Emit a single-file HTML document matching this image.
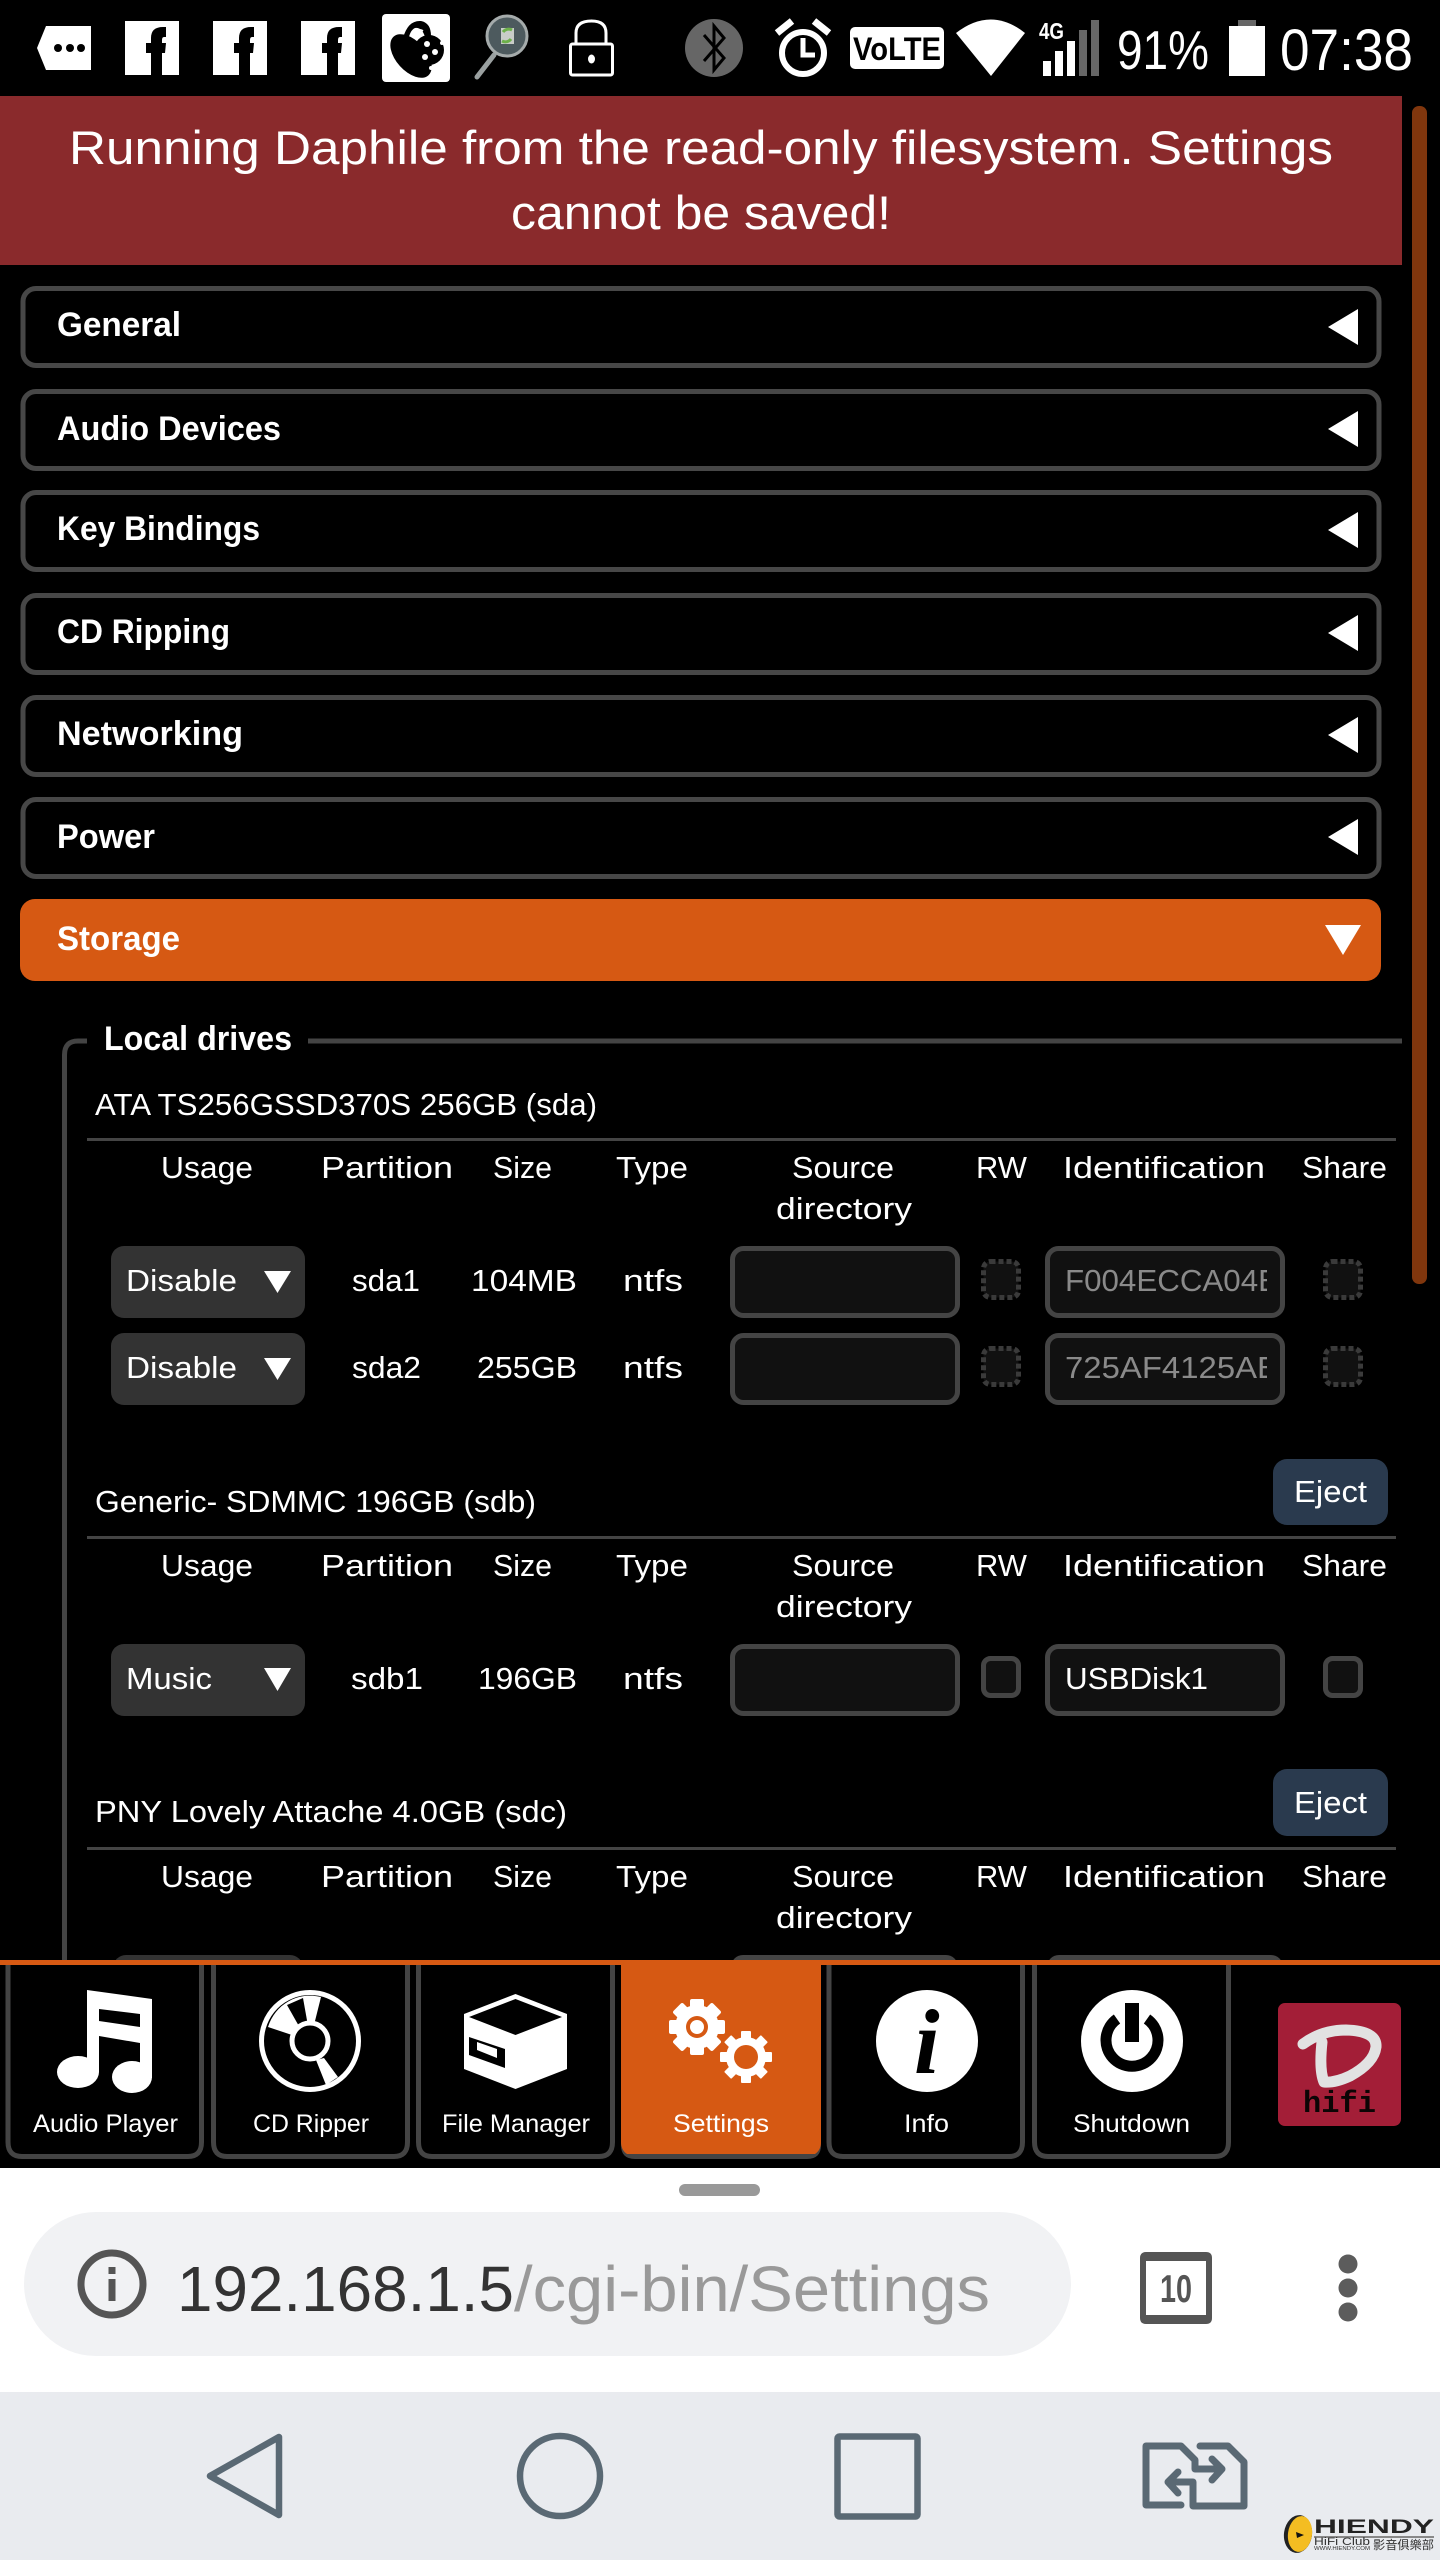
<!DOCTYPE html>
<html lang="en"><head><meta charset="utf-8"><title>Daphile Settings</title>
<style>
html,body{margin:0;padding:0;background:#000;width:1440px;height:2560px;overflow:hidden}
svg{display:block}
text{font-family:"Liberation Sans","Noto Sans CJK TC",sans-serif;fill:#fff}
.r{font-size:31px}
.b{font-size:34px;font-weight:bold}
.n{font-size:25px}
.bn{font-size:47px}
.sel{fill:#333}
.inp{fill:#111;stroke:#444;stroke-width:5}
.dash{fill:#111;stroke:#3a3a3a;stroke-width:5;stroke-dasharray:5 3}
.chk{fill:#111;stroke:#444;stroke-width:5}
.acc{fill:#000;stroke:#474747;stroke-width:5}
.div{fill:#444}
.tab{fill:#000;stroke:#444;stroke-width:5}
</style></head><body>
<svg width="1440" height="2560" viewBox="0 0 1440 2560" xmlns="http://www.w3.org/2000/svg">
<defs>
<clipPath id="c1"><rect x="1060" y="1250" width="207" height="160"/></clipPath>
</defs>
<rect width="1440" height="2560" fill="#000"/>

<!-- status bar -->
<path d="M37 48 L46 26 H91 V70 H46 Z" fill="#fff"/>
<circle cx="58" cy="48" r="4" fill="#000"/><circle cx="70" cy="48" r="4" fill="#000"/><circle cx="81" cy="48" r="4" fill="#000"/>

<rect x="125" y="21" width="54" height="54" fill="#fff"/>
<path d="M151 75 V53 H146 V43 H151 V38 Q151 27 163 27 H166 V37 H164 Q162 37 162 40 V43 H166 L165 53 H162 V75 Z" fill="#000"/>
<rect x="213" y="21" width="54" height="54" fill="#fff"/>
<path d="M239 75 V53 H234 V43 H239 V38 Q239 27 251 27 H254 V37 H252 Q250 37 250 40 V43 H254 L253 53 H250 V75 Z" fill="#000"/>
<rect x="301" y="21" width="54" height="54" fill="#fff"/>
<path d="M327 75 V53 H322 V43 H327 V38 Q327 27 339 27 H342 V37 H340 Q338 37 338 40 V43 H342 L341 53 H338 V75 Z" fill="#000"/>

<rect x="382" y="14" width="68" height="68" rx="4" fill="#fff"/>
<ellipse cx="411" cy="56" rx="26" ry="15" transform="rotate(48 411 56)" fill="#000"/>
<circle cx="429" cy="50" r="15" fill="#000"/>
<path d="M403 38 Q408 20 421 21 Q431 23 431 36 L425 37 Q422 27 415 28 Q410 30 408 41 Z" fill="#000"/>
<path d="M414 34 Q417 28 423 31" fill="none" stroke="#fff" stroke-width="2"/>
<circle cx="427" cy="44" r="3" fill="#fff"/><circle cx="435" cy="52" r="3" fill="#fff"/><circle cx="425" cy="57" r="3" fill="#fff"/><circle cx="442" cy="43" r="2" fill="#fff"/><circle cx="431" cy="68" r="2" fill="#fff"/>

<path d="M494 55 L477 77" stroke="#9aa0a0" stroke-width="5" stroke-linecap="round"/>
<circle cx="507" cy="36" r="20" fill="#4d5a5e" stroke="#a5abab" stroke-width="3"/>
<rect x="501" y="28" width="13" height="16" fill="#c9ccc8"/>
<path d="M512 30 A7 7 0 0 0 503 32 M502 41 A7 7 0 0 0 511 39" stroke="#6db04a" stroke-width="3" fill="none"/>

<path d="M576 44 V33 Q576 21 591.500 21 Q606 21 606 33 V44" fill="none" stroke="#fff" stroke-width="3"/>
<rect x="570.500" y="44" width="42" height="31" rx="2" fill="#000" stroke="#fff" stroke-width="3"/>
<ellipse cx="591.500" cy="59" rx="3.500" ry="4.500" fill="#fff"/>

<circle cx="714" cy="48" r="29" fill="#666"/>
<path d="M704 35 L724 58 L714 70 V26 L724 38 L704 61" fill="none" stroke="#000" stroke-width="3"/>

<path d="M777 33 L792 21 M814 21 L829 33" stroke="#fff" stroke-width="7"/>
<circle cx="803" cy="53" r="21" fill="none" stroke="#fff" stroke-width="6"/>
<path d="M803 38 V55 H815" fill="none" stroke="#fff" stroke-width="5"/>

<rect x="850" y="27" width="94" height="42" rx="5" fill="#fff"/>
<text x="853" y="60" font-size="32" font-weight="bold" style="fill:#000" textLength="88" lengthAdjust="spacingAndGlyphs">VoLTE</text>

<path d="M956 33 Q991 6 1025 33 L991 76 Z" fill="#fff"/>

<text x="1039" y="39" font-size="23" font-weight="bold" textLength="25" lengthAdjust="spacingAndGlyphs">4G</text>
<rect x="1043" y="61" width="8" height="15" fill="#fff"/>
<rect x="1055" y="51" width="8" height="25" fill="#fff"/>
<rect x="1067" y="41" width="8" height="35" fill="#fff"/>
<rect x="1079" y="30" width="8" height="46" fill="#666"/>
<rect x="1091" y="20" width="8" height="56" fill="#666"/>

<text x="1117" y="69" font-size="55" textLength="92" lengthAdjust="spacingAndGlyphs">91%</text>
<rect x="1238" y="20" width="18" height="7" fill="#666"/>
<rect x="1229" y="26" width="36" height="50" fill="#fff"/>
<text x="1280" y="70" font-size="58" textLength="133" lengthAdjust="spacingAndGlyphs">07:38</text>

<!-- banner -->
<rect x="0" y="96" width="1402" height="169" fill="#8a2a2c"/>
<text class="bn" x="69" y="164" textLength="1264" lengthAdjust="spacingAndGlyphs">Running Daphile from the read-only filesystem. Settings</text>
<text class="bn" x="511" y="229" textLength="380" lengthAdjust="spacingAndGlyphs">cannot be saved!</text>

<!-- scrollbar -->
<rect x="1412" y="106" width="15" height="1178" rx="7" fill="#80360d"/>

<!-- accordion -->
<rect class="acc" x="23" y="288.500" width="1356" height="77" rx="13"/>
<text class="b" x="57" y="336" textLength="124" lengthAdjust="spacingAndGlyphs">General</text>
<path d="M1328 327 L1358 309 V345 Z" fill="#fff"/>

<rect class="acc" x="23" y="391.500" width="1356" height="77" rx="13"/>
<text class="b" x="57" y="440" textLength="224" lengthAdjust="spacingAndGlyphs">Audio Devices</text>
<path d="M1328 429 L1358 411 V447 Z" fill="#fff"/>

<rect class="acc" x="23" y="492.500" width="1356" height="77" rx="13"/>
<text class="b" x="57" y="540" textLength="203" lengthAdjust="spacingAndGlyphs">Key Bindings</text>
<path d="M1328 530 L1358 512 V548 Z" fill="#fff"/>

<rect class="acc" x="23" y="595.500" width="1356" height="77" rx="13"/>
<text class="b" x="57" y="643" textLength="173" lengthAdjust="spacingAndGlyphs">CD Ripping</text>
<path d="M1328 633 L1358 615 V651 Z" fill="#fff"/>

<rect class="acc" x="23" y="697.500" width="1356" height="77" rx="13"/>
<text class="b" x="57" y="745" textLength="186" lengthAdjust="spacingAndGlyphs">Networking</text>
<path d="M1328 735 L1358 717 V753 Z" fill="#fff"/>

<rect class="acc" x="23" y="799.500" width="1356" height="77" rx="13"/>
<text class="b" x="57" y="848" textLength="98" lengthAdjust="spacingAndGlyphs">Power</text>
<path d="M1328 837 L1358 819 V855 Z" fill="#fff"/>

<rect x="20" y="899" width="1361" height="82" rx="15" fill="#d65913"/>
<text class="b" x="57" y="950" textLength="123" lengthAdjust="spacingAndGlyphs">Storage</text>
<path d="M1325 925 H1361 L1343 955 Z" fill="#fff"/>

<!-- fieldset -->
<path d="M87 1041 H78 Q64.500 1041 64.500 1055 V1962" fill="none" stroke="#444" stroke-width="5"/>
<rect x="308" y="1038.500" width="1094" height="5" fill="#444"/>
<text class="b" x="104" y="1050" textLength="188" lengthAdjust="spacingAndGlyphs">Local drives</text>

<!-- drive 1 -->
<text class="r" x="95" y="1115" textLength="502" lengthAdjust="spacingAndGlyphs">ATA TS256GSSD370S 256GB (sda)</text>
<rect class="div" x="87" y="1138" width="1309" height="3"/>
<text class="r" x="161" y="1178" textLength="92" lengthAdjust="spacingAndGlyphs">Usage</text>
<text class="r" x="321" y="1178" textLength="132" lengthAdjust="spacingAndGlyphs">Partition</text>
<text class="r" x="493" y="1178" textLength="59" lengthAdjust="spacingAndGlyphs">Size</text>
<text class="r" x="616" y="1178" textLength="72" lengthAdjust="spacingAndGlyphs">Type</text>
<text class="r" x="792" y="1178" textLength="102" lengthAdjust="spacingAndGlyphs">Source</text>
<text class="r" x="776" y="1219" textLength="136" lengthAdjust="spacingAndGlyphs">directory</text>
<text class="r" x="976" y="1178" textLength="51" lengthAdjust="spacingAndGlyphs">RW</text>
<text class="r" x="1063" y="1178" textLength="202" lengthAdjust="spacingAndGlyphs">Identification</text>
<text class="r" x="1302" y="1178" textLength="85" lengthAdjust="spacingAndGlyphs">Share</text>

<rect class="sel" x="111" y="1246" width="194" height="72" rx="13"/>
<text class="r" x="126" y="1291" textLength="111" lengthAdjust="spacingAndGlyphs">Disable</text>
<path d="M264 1271 H291 L277.500 1293 Z" fill="#fff"/>
<text class="r" x="352" y="1291" textLength="68" lengthAdjust="spacingAndGlyphs">sda1</text>
<text class="r" x="471" y="1291" textLength="106" lengthAdjust="spacingAndGlyphs">104MB</text>
<text class="r" x="623" y="1291" textLength="60" lengthAdjust="spacingAndGlyphs">ntfs</text>
<rect class="inp" x="732.500" y="1248.500" width="225" height="67" rx="11"/>
<rect class="dash" x="983.500" y="1261.500" width="35" height="36" rx="7"/>
<rect class="inp" x="1047.500" y="1248.500" width="235" height="67" rx="11"/>
<g clip-path="url(#c1)"><text class="r" x="1065" y="1291" style="fill:#8a8a8a" textLength="214" lengthAdjust="spacingAndGlyphs">F004ECCA04E</text></g>
<rect class="dash" x="1325.500" y="1261.500" width="35" height="36" rx="7"/>

<rect class="sel" x="111" y="1333" width="194" height="72" rx="13"/>
<text class="r" x="126" y="1378" textLength="111" lengthAdjust="spacingAndGlyphs">Disable</text>
<path d="M264 1358 H291 L277.500 1380 Z" fill="#fff"/>
<text class="r" x="352" y="1378" textLength="69" lengthAdjust="spacingAndGlyphs">sda2</text>
<text class="r" x="477" y="1378" textLength="100" lengthAdjust="spacingAndGlyphs">255GB</text>
<text class="r" x="623" y="1378" textLength="60" lengthAdjust="spacingAndGlyphs">ntfs</text>
<rect class="inp" x="732.500" y="1335.500" width="225" height="67" rx="11"/>
<rect class="dash" x="983.500" y="1348.500" width="35" height="36" rx="7"/>
<rect class="inp" x="1047.500" y="1335.500" width="235" height="67" rx="11"/>
<g clip-path="url(#c1)"><text class="r" x="1065" y="1378" style="fill:#8a8a8a" textLength="214" lengthAdjust="spacingAndGlyphs">725AF4125AE</text></g>
<rect class="dash" x="1325.500" y="1348.500" width="35" height="36" rx="7"/>

<!-- drive 2 -->
<rect x="1273" y="1459" width="115" height="66" rx="14" fill="#2a3a4e"/>
<text class="r" x="1294" y="1502" textLength="73" lengthAdjust="spacingAndGlyphs">Eject</text>
<text class="r" x="95" y="1512" textLength="441" lengthAdjust="spacingAndGlyphs">Generic- SDMMC 196GB (sdb)</text>
<rect class="div" x="87" y="1536" width="1309" height="3"/>
<text class="r" x="161" y="1576" textLength="92" lengthAdjust="spacingAndGlyphs">Usage</text>
<text class="r" x="321" y="1576" textLength="132" lengthAdjust="spacingAndGlyphs">Partition</text>
<text class="r" x="493" y="1576" textLength="59" lengthAdjust="spacingAndGlyphs">Size</text>
<text class="r" x="616" y="1576" textLength="72" lengthAdjust="spacingAndGlyphs">Type</text>
<text class="r" x="792" y="1576" textLength="102" lengthAdjust="spacingAndGlyphs">Source</text>
<text class="r" x="776" y="1617" textLength="136" lengthAdjust="spacingAndGlyphs">directory</text>
<text class="r" x="976" y="1576" textLength="51" lengthAdjust="spacingAndGlyphs">RW</text>
<text class="r" x="1063" y="1576" textLength="202" lengthAdjust="spacingAndGlyphs">Identification</text>
<text class="r" x="1302" y="1576" textLength="85" lengthAdjust="spacingAndGlyphs">Share</text>

<rect class="sel" x="111" y="1644" width="194" height="72" rx="13"/>
<text class="r" x="126" y="1689" textLength="86" lengthAdjust="spacingAndGlyphs">Music</text>
<path d="M264 1668 H291 L277.500 1691 Z" fill="#fff"/>
<text class="r" x="351" y="1689" textLength="72" lengthAdjust="spacingAndGlyphs">sdb1</text>
<text class="r" x="478" y="1689" textLength="99" lengthAdjust="spacingAndGlyphs">196GB</text>
<text class="r" x="623" y="1689" textLength="60" lengthAdjust="spacingAndGlyphs">ntfs</text>
<rect class="inp" x="732.500" y="1646.500" width="225" height="67" rx="11"/>
<rect class="chk" x="983.500" y="1658.500" width="35" height="37" rx="7"/>
<rect class="inp" x="1047.500" y="1646.500" width="235" height="67" rx="11"/>
<text class="r" x="1065" y="1689" textLength="143" lengthAdjust="spacingAndGlyphs">USBDisk1</text>
<rect class="chk" x="1325.500" y="1658.500" width="35" height="37" rx="7"/>

<!-- drive 3 -->
<rect x="1273" y="1769" width="115" height="67" rx="14" fill="#2a3a4e"/>
<text class="r" x="1294" y="1813" textLength="73" lengthAdjust="spacingAndGlyphs">Eject</text>
<text class="r" x="95" y="1822" textLength="472" lengthAdjust="spacingAndGlyphs">PNY Lovely Attache 4.0GB (sdc)</text>
<rect class="div" x="87" y="1847" width="1309" height="3"/>
<text class="r" x="161" y="1887" textLength="92" lengthAdjust="spacingAndGlyphs">Usage</text>
<text class="r" x="321" y="1887" textLength="132" lengthAdjust="spacingAndGlyphs">Partition</text>
<text class="r" x="493" y="1887" textLength="59" lengthAdjust="spacingAndGlyphs">Size</text>
<text class="r" x="616" y="1887" textLength="72" lengthAdjust="spacingAndGlyphs">Type</text>
<text class="r" x="792" y="1887" textLength="102" lengthAdjust="spacingAndGlyphs">Source</text>
<text class="r" x="776" y="1928" textLength="136" lengthAdjust="spacingAndGlyphs">directory</text>
<text class="r" x="976" y="1887" textLength="51" lengthAdjust="spacingAndGlyphs">RW</text>
<text class="r" x="1063" y="1887" textLength="202" lengthAdjust="spacingAndGlyphs">Identification</text>
<text class="r" x="1302" y="1887" textLength="85" lengthAdjust="spacingAndGlyphs">Share</text>
<rect class="sel" x="113" y="1955" width="190" height="40" rx="13"/>
<rect x="731" y="1955" width="227" height="40" rx="12" fill="#444"/>
<rect x="1047" y="1955" width="236" height="40" rx="12" fill="#444"/>

<!-- bottom nav -->
<rect x="0" y="1960" width="1440" height="208" fill="#000"/>
<rect x="0" y="1960" width="1440" height="5" fill="#d65913"/>

<path class="tab" d="M8 1965 V2142 Q8 2156.500 22 2156.500 H188 Q201.500 2156.500 201.500 2142 V1965"/>
<path class="tab" d="M213.500 1965 V2142 Q213.500 2156.500 227 2156.500 H394 Q407.500 2156.500 407.500 2142 V1965"/>
<path class="tab" d="M418.500 1965 V2142 Q418.500 2156.500 432 2156.500 H599 Q612.500 2156.500 612.500 2142 V1965"/>
<path d="M621 1965 V2145 Q621 2159 635 2159 H807 Q821 2159 821 2145 V1965 Z" fill="#444"/>
<path d="M621 1965 V2142 Q621 2150 627 2154 H815 Q821 2150 821 2142 V1965 Z" fill="#d65913"/>
<path class="tab" d="M829 1965 V2142 Q829 2156.500 843 2156.500 H1009 Q1022.500 2156.500 1022.500 2142 V1965"/>
<path class="tab" d="M1034.500 1965 V2142 Q1034.500 2156.500 1048 2156.500 H1215 Q1228.500 2156.500 1228.500 2142 V1965"/>

<!-- music -->
<path fill-rule="evenodd" d="M87 1990 L152 1999 V2078 H140 V2043 L99 2036 V2072 H87 Z M99 2009 L140 2014 V2027 L99 2021 Z" fill="#fff"/>
<ellipse cx="78" cy="2072" rx="21" ry="16" fill="#fff"/>
<ellipse cx="132" cy="2077" rx="20" ry="16" fill="#fff"/>
<!-- cd -->
<circle cx="310" cy="2041" r="48.500" fill="#000" stroke="#fff" stroke-width="5"/>
<path d="M310 2041 L268 2027 A44 44 0 0 1 321 1997 Z" fill="#fff"/>
<path d="M287 2005 L303 1998 L308 2026 L300 2028 Z" fill="#000"/>
<path d="M316 2060 L324 2058 L338 2077 L326 2085 Z" fill="#fff"/>
<circle cx="310" cy="2041" r="18" fill="#000" stroke="#fff" stroke-width="5"/>
<!-- box -->
<path d="M515.500 1994 L567 2014 V2069 L515.500 2089 L464 2069 V2014 Z" fill="#fff"/>
<path d="M515.500 1999 L562 2017 L515.500 2035 L469 2017 Z" fill="#000"/>
<path d="M469 2037 L505 2049 V2068 L469 2055 Z" fill="#000"/>
<path d="M477 2042 L497 2049 V2058 L477 2050 Z" fill="#fff"/>
<!-- gears -->
<g fill="#fff">
<g transform="translate(697 2027)">
<rect x="-7" y="-28" width="14" height="56" rx="2"/><rect x="-7" y="-28" width="14" height="56" rx="2" transform="rotate(45)"/><rect x="-7" y="-28" width="14" height="56" rx="2" transform="rotate(90)"/><rect x="-7" y="-28" width="14" height="56" rx="2" transform="rotate(135)"/>
<circle r="22"/><circle r="11" fill="#d65913"/><circle r="7"/>
</g>
<g transform="translate(746 2057)">
<rect x="-5" y="-26" width="10" height="52" rx="1"/><rect x="-5" y="-26" width="10" height="52" rx="1" transform="rotate(45)"/><rect x="-5" y="-26" width="10" height="52" rx="1" transform="rotate(90)"/><rect x="-5" y="-26" width="10" height="52" rx="1" transform="rotate(135)"/>
<circle r="20"/><circle r="12" fill="#d65913"/>
</g>
</g>
<!-- info -->
<circle cx="927" cy="2041" r="51" fill="#fff"/>
<text x="914" y="2073" font-size="92" font-style="italic" font-weight="bold" style="fill:#000;font-family:'Liberation Serif',serif">i</text>
<!-- power -->
<circle cx="1132" cy="2041" r="51" fill="#fff"/>
<path d="M1117 2019 A26 26 0 1 0 1147 2019" fill="none" stroke="#000" stroke-width="11"/>
<rect x="1125" y="2003" width="14" height="39" fill="#000"/>
<!-- labels -->
<text class="n" x="33" y="2132" textLength="145" lengthAdjust="spacingAndGlyphs">Audio Player</text>
<text class="n" x="253" y="2132" textLength="116" lengthAdjust="spacingAndGlyphs">CD Ripper</text>
<text class="n" x="442" y="2132" textLength="148" lengthAdjust="spacingAndGlyphs">File Manager</text>
<text class="n" x="673" y="2132" textLength="96" lengthAdjust="spacingAndGlyphs">Settings</text>
<text class="n" x="904" y="2132" textLength="45" lengthAdjust="spacingAndGlyphs">Info</text>
<text class="n" x="1073" y="2132" textLength="117" lengthAdjust="spacingAndGlyphs">Shutdown</text>
<!-- hifi logo -->
<rect x="1278" y="2003" width="123" height="123" rx="7" fill="#a31e37"/>
<path d="M1303 2044 Q1322 2030 1346 2030 Q1377 2031 1376 2047 Q1374 2063 1350 2076 Q1335 2083 1324 2082 Q1319 2070 1322 2042" fill="none" stroke="#e2e2e2" stroke-width="11" stroke-linecap="round" stroke-linejoin="round"/>
<text x="1303" y="2112" font-size="31" font-weight="bold" style="fill:#0c0505;font-family:'Liberation Mono',monospace" textLength="73" lengthAdjust="spacingAndGlyphs">hifi</text>

<!-- browser bar -->
<rect x="0" y="2168" width="1440" height="224" fill="#fff"/>
<rect x="679" y="2184" width="81" height="12" rx="6" fill="#999"/>
<rect x="24" y="2212" width="1047" height="144" rx="72" fill="#f1f2f4"/>
<circle cx="112" cy="2284" r="31" fill="none" stroke="#555" stroke-width="7"/>
<rect x="108.500" y="2279" width="7" height="22" fill="#555"/>
<rect x="108.500" y="2267" width="7" height="7" fill="#555"/>
<text x="177" y="2311" font-size="64" style="fill:#333" textLength="337" lengthAdjust="spacingAndGlyphs">192.168.1.5</text>
<text x="514" y="2311" font-size="64" style="fill:#999" textLength="476" lengthAdjust="spacingAndGlyphs">/cgi-bin/Settings</text>
<rect x="1143" y="2255" width="66" height="66" rx="5" fill="#fff" stroke="#555" stroke-width="6"/>
<path d="M1140 2261 V2258 Q1140 2252 1146 2252 H1206 Q1212 2252 1212 2258 V2261 Z" fill="#555"/>
<path d="M1140 2315 V2318 Q1140 2324 1146 2324 H1206 Q1212 2324 1212 2318 V2315 Z" fill="#555"/>
<text x="1160" y="2302" font-size="39" font-weight="bold" style="fill:#555" textLength="32" lengthAdjust="spacingAndGlyphs">10</text>
<circle cx="1348" cy="2264" r="9.500" fill="#5c5c5c"/>
<circle cx="1348" cy="2288" r="9.500" fill="#5c5c5c"/>
<circle cx="1348" cy="2312" r="9.500" fill="#5c5c5c"/>

<!-- android nav -->
<rect x="0" y="2392" width="1440" height="168" fill="#e9ebef"/>
<path d="M279 2437 V2515 L210 2476 Z" fill="none" stroke="#5a6974" stroke-width="6.500" stroke-linejoin="round"/>
<circle cx="560" cy="2476" r="40" fill="none" stroke="#5a6974" stroke-width="6.500"/>
<rect x="837.500" y="2436.500" width="80" height="80" rx="2" fill="none" stroke="#5a6974" stroke-width="6.500"/>
<g fill="none" stroke="#5a6974" stroke-width="7" stroke-linecap="round" stroke-linejoin="round">
<path d="M1181 2505 H1146 V2446 H1181 L1195 2460 V2469 H1222 M1212 2459 L1222 2469 L1212 2480"/>
<path d="M1200 2446 H1228 L1244 2462 V2506 H1193 V2482 H1168 M1178 2472 L1168 2482 L1178 2493"/>
</g>

<!-- watermark -->
<ellipse cx="1298" cy="2534" rx="14" ry="19" fill="#222" transform="rotate(8 1298 2534)"/>
<ellipse cx="1300" cy="2534" rx="12" ry="18" fill="#f4bd22" transform="rotate(8 1300 2534)"/>
<path d="M1296 2532 L1304 2535 L1297 2538 Z" fill="#111"/>
<text x="1314" y="2533" font-size="19" font-weight="bold" style="fill:#222" textLength="120" lengthAdjust="spacingAndGlyphs">HIENDY</text>
<rect x="1314" y="2536" width="120" height="2" fill="#888"/>
<text x="1314" y="2545" font-size="11" style="fill:#333" textLength="56" lengthAdjust="spacingAndGlyphs">HiFi Club</text>
<text x="1314" y="2550" font-size="5" style="fill:#333" textLength="56" lengthAdjust="spacingAndGlyphs">WWW.HIENDY.COM</text>
<text x="1373" y="2549" font-size="12" style="fill:#333;font-family:'Liberation Sans','Noto Sans CJK TC',sans-serif" textLength="61" lengthAdjust="spacingAndGlyphs">影音俱樂部</text>
</svg>
</body></html>
